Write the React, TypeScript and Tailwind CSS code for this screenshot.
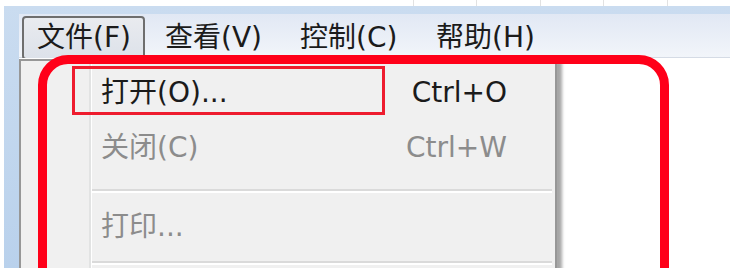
import React from "react";

const font = { fontFamily: '"DejaVu Sans", "Noto Sans CJK SC", sans-serif' };

function MenuItem({ label, active, ml }: { label: string; active?: boolean; ml: string }) {
  return (
    <div
      className={`${ml} mt-[2px] h-[44px] w-[123px] shrink-0 flex items-center pl-[13px] text-[28px] text-[#1b1b1b] ${
        active
          ? "rounded-[4px] border-[2px] border-[#6e6e6e] bg-gradient-to-b from-[#e9ebef] to-[#dde2ea] pl-[11px]"
          : ""
      }`}
    >
      <span className="leading-none whitespace-nowrap">{label}</span>
    </div>
  );
}

export default function App() {
  return (
    <div className="relative w-[730px] h-[268px] overflow-hidden bg-white flex flex-col" style={font}>
      {/* top strip */}
      <div className="h-[6px] flex shrink-0">
        <div className="w-[429px]" />
        {[0, 1, 2, 3, 4].map((i) => (
          <div key={i} className="w-[66px] border-l border-[#e2e2e2]" />
        ))}
      </div>
      {/* window frame */}
      <div className="flex-1 ml-[4px] bg-gradient-to-b from-[#cadcf0] to-[#b9d1ec] pt-[8px] pl-[15px] flex flex-col">
        {/* menu bar */}
        <div className="h-[44px] shrink-0 flex items-start bg-gradient-to-b from-[#e1e8f4] to-[#f2f5fa] border-b border-[#d5dbe5]">
          <MenuItem label="文件(F)" active ml="ml-[3px]" />
          <MenuItem label="查看(V)" ml="ml-[7px]" />
          <MenuItem label="控制(C)" ml="ml-[12px]" />
          <MenuItem label="帮助(H)" ml="ml-[13px]" />
        </div>
        <div className="flex-1 bg-white" />
      </div>

      {/* dropdown menu */}
      <div className="absolute left-[19px] top-[59px] w-[538px] h-[230px] bg-[#f0f0f0] border-[2px] border-[#979797] shadow-[5px_3px_3px_rgba(0,0,0,0.35)] flex">
        <div className="w-[70px] shrink-0 border-r-[2px] border-r-[#e2e3e3]" />
        <div className="flex-1 flex flex-col pt-[5px] pr-[3px] border-l border-white">
          <div className="h-[54px] flex items-center justify-between pl-[9px] pr-[45px] text-[28px] text-[#1b1b1b]">
            <span className="leading-none whitespace-nowrap">打开(O)...</span>
            <span className="leading-none">Ctrl+O</span>
          </div>
          <div className="h-[56px] flex items-center justify-between pl-[9px] pr-[45px] text-[28px] text-[#8c8c8c]">
            <span className="leading-none whitespace-nowrap">关闭(C)</span>
            <span className="leading-none">Ctrl+W</span>
          </div>
          <div className="h-[29px] flex flex-col justify-center">
            <div className="h-[2px] bg-[#dadada]" />
            <div className="h-[2px] bg-white" />
          </div>
          <div className="h-[44px] flex items-center pl-[9px] text-[28px] text-[#8c8c8c]">
            <span className="leading-none whitespace-nowrap">打印...</span>
          </div>
          <div className="h-[28px] flex flex-col justify-center">
            <div className="h-[2px] bg-[#dadada]" />
            <div className="h-[2px] bg-white" />
          </div>
        </div>
      </div>

      {/* red annotations */}
      <div className="absolute left-[38px] top-[55px] w-[631px] h-[260px] border-[9px] border-[#ff0019] rounded-[30px]" />
      <div className="absolute left-[72px] top-[66px] w-[313px] h-[49px] border-[3px] border-[#ee1c2e]" />
    </div>
  );
}
